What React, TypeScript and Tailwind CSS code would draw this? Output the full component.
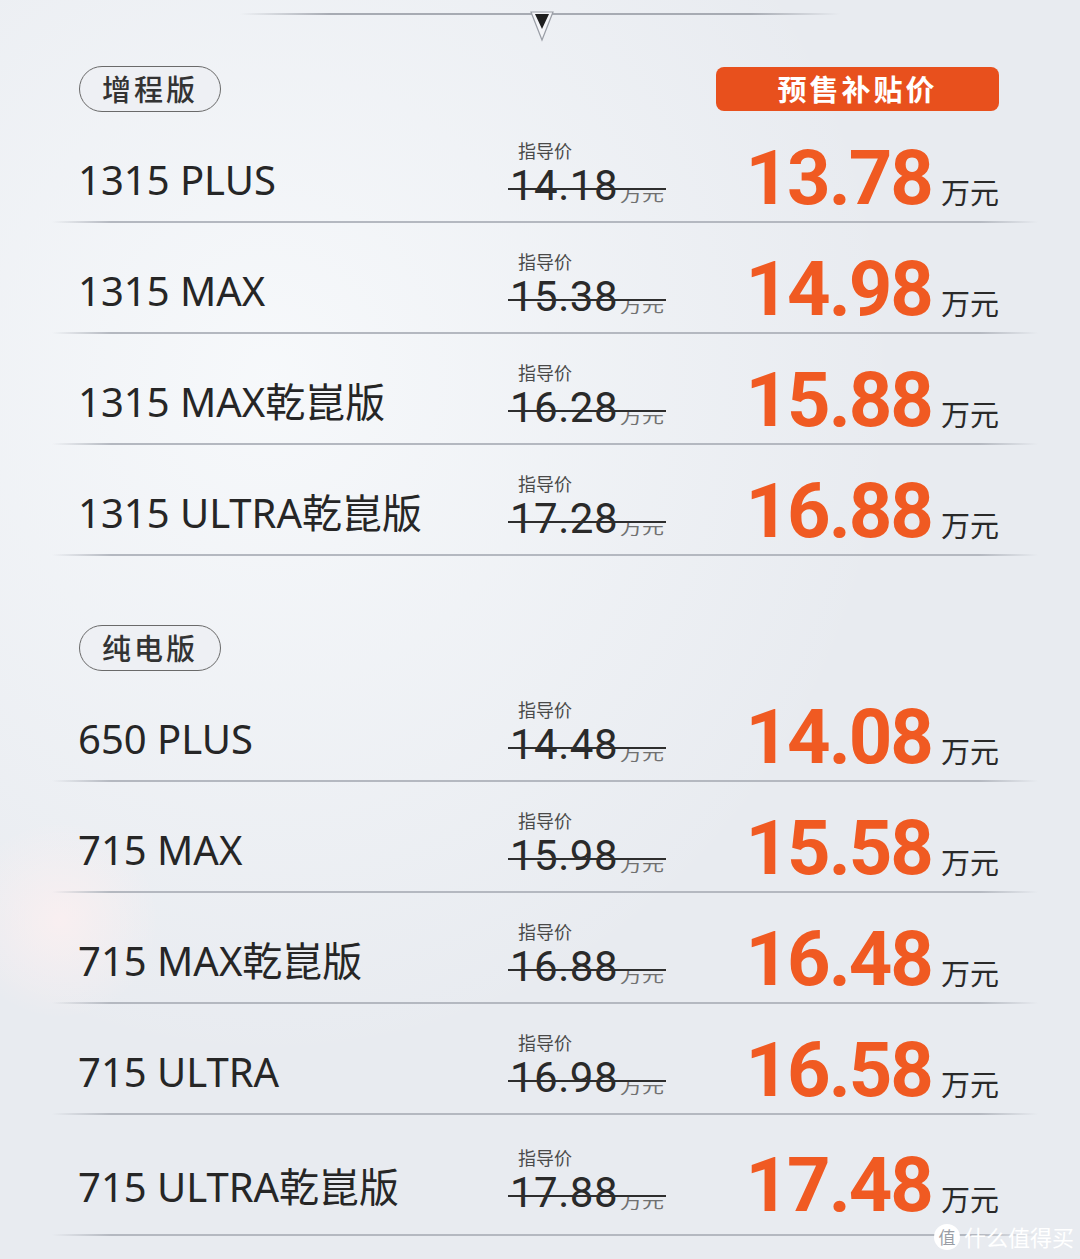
import React from "react";

type Row = { name: string; old: string; price: string };

const groupA: Row[] = [
  { name: "1315 PLUS", old: "14.18", price: "13.78" },
  { name: "1315 MAX", old: "15.38", price: "14.98" },
  { name: "1315 MAX乾崑版", old: "16.28", price: "15.88" },
  { name: "1315 ULTRA乾崑版", old: "17.28", price: "16.88" },
];

const groupB: Row[] = [
  { name: "650 PLUS", old: "14.48", price: "14.08" },
  { name: "715 MAX", old: "15.98", price: "15.58" },
  { name: "715 MAX乾崑版", old: "16.88", price: "16.48" },
  { name: "715 ULTRA", old: "16.98", price: "16.58" },
  { name: "715 ULTRA乾崑版", old: "17.88", price: "17.48" },
];

const sans = "font-['Noto_Sans','Noto_Sans_CJK_SC',sans-serif]";
const num = "font-['Roboto','Noto_Sans_CJK_SC',sans-serif]";

function Divider() {
  return (
    <div className="ml-[52px] mr-[42px] h-[2px] bg-[linear-gradient(90deg,rgba(170,174,182,0)_0%,#b4b8c0_6%,#b4b8c0_94%,rgba(170,174,182,0)_100%)]" />
  );
}

function PriceRow({ r, tall }: { r: Row; tall?: boolean }) {
  return (
    <div>
      <div className={`flex items-end pl-[78px] pr-[81px] ${tall ? "h-[119px] pb-[6px]" : "h-[109px]"}`}>
        <div className={`flex-1 ${sans} text-[40px] leading-none text-[#262626] mb-[21px] whitespace-nowrap`}>
          {r.name}
        </div>
        <div className="w-[238px] shrink-0 flex flex-col mb-[14px]">
          <div className={`${sans} pl-[10px] text-[18px] leading-none text-[#4a4a4a] mb-[5px]`}>指导价</div>
          <div className="relative flex items-baseline self-start pl-[2px] whitespace-nowrap">
            <span className={`${num} text-[42px] leading-none tracking-[0.5px] text-[#2a2a2a]`}>{r.old}</span>
            <span className={`${sans} inline-block text-[22px] leading-none text-[#707070] ml-[2px] scale-y-[0.72] origin-bottom`}>万元</span>
            <div className="absolute left-0 right-[-2px] bottom-[17px] h-[2px] bg-[#2e2e2e]" />
          </div>
        </div>
        <div className="w-[253px] flex flex-nowrap items-baseline justify-end shrink-0 whitespace-nowrap mb-[5px]">
          <span className={`${num} shrink-0 text-[76px] font-bold leading-none tracking-[-2px] text-[#f05a22]`}>{r.price}</span>
          <span className={`${sans} shrink-0 text-[29px] leading-none text-[#2a2a2a] ml-[9px]`}>万元</span>
        </div>
      </div>
      <Divider />
    </div>
  );
}

function Pill({ label }: { label: string }) {
  return (
    <div
      className={`w-[142px] h-[46px] rounded-full border-[1.5px] border-[#6a6a6a] bg-[#eef0f4] flex items-center justify-center ${sans} text-[29px] font-medium tracking-[3px] text-[#333] leading-none`}
    >
      {label}
    </div>
  );
}

export default function App() {
  return (
    <div className="relative w-[1080px] h-[1259px] overflow-hidden bg-[#e8ebf0]">
      <div className="absolute inset-0 bg-[radial-gradient(ellipse_at_25%_30%,rgba(248,250,252,0.9),rgba(232,235,240,0)_55%)]" />
      <div className="absolute left-[-40px] top-[820px] w-[200px] h-[200px] rounded-full bg-[radial-gradient(circle,rgba(255,240,240,0.7),rgba(232,235,240,0)_70%)]" />
      <div className="relative">
        {/* top line */}
        <div className="pt-[13px] h-[66px] relative">
          <div className="ml-[240px] w-[600px] h-[2px] bg-[linear-gradient(90deg,rgba(170,174,182,0)_0%,#a7abb3_15%,#a7abb3_85%,rgba(170,174,182,0)_100%)]" />
          <svg
            className="absolute left-[530px] top-[11px]"
            width="24"
            height="31"
            viewBox="0 0 24 31"
          >
            <polygon points="1,1 23,1 12,29" fill="#f4f5f8" stroke="#9a9ea6" strokeWidth="1.2" />
            <polygon points="5,3 19,3 12,18" fill="#1e1e1e" />
          </svg>
        </div>

        {/* group A */}
        <div className="flex items-center pl-[79px] pr-[81px]">
          <Pill label="增程版" />
          <div
            className={`ml-auto w-[283px] h-[44px] rounded-[8px] bg-[#e8501d] flex items-center justify-center ${sans} text-[29px] font-bold tracking-[3px] text-white leading-none`}
          >
            预售补贴价
          </div>
        </div>
        {groupA.map((r) => (
          <PriceRow key={r.name} r={r} />
        ))}

        {/* group B */}
        <div className="pl-[79px] mt-[69px]">
          <Pill label="纯电版" />
        </div>
        {groupB.map((r, i) => (
          <PriceRow key={r.name} r={r} tall={i === groupB.length - 1} />
        ))}
      </div>

      {/* watermark */}
      <div className="absolute right-[6px] bottom-[9px] flex items-center gap-[4px]">
        <div className={`w-[26px] h-[26px] rounded-full bg-white flex items-center justify-center ${sans} text-[17px] text-[#9a9ea6] leading-none`}>
          值
        </div>
        <span className={`${sans} text-[22px] text-white leading-none tracking-[0px]`}>什么值得买</span>
      </div>
    </div>
  );
}
